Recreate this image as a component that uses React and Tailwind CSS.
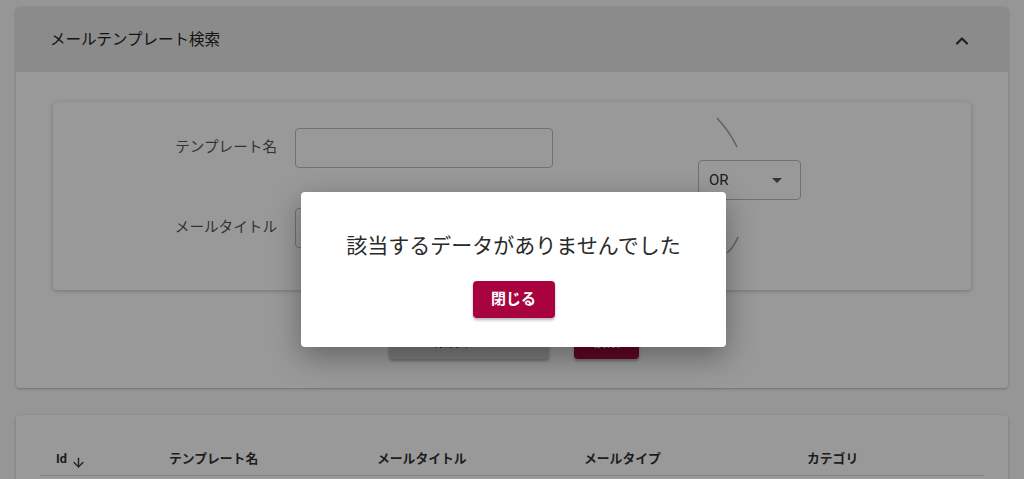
import { ChevronUp, ArrowDown } from 'lucide-react';

const font = { fontFamily: 'Roboto, "Noto Sans CJK JP", sans-serif' };

const FieldRow = ({ label }) => (
    <div className="flex items-center h-10">
        <label className="w-[242px] text-right text-[14.6px] text-[#555] pr-[18px]">{label}</label>
        <input className="w-[258px] h-10 border border-[#bdbdbd] rounded bg-white px-3 text-sm outline-none" />
    </div>
);

const Bracket = () => (
    <svg className="absolute left-0 top-0" width="80" height="160" viewBox="0 0 80 160" fill="none">
        <path d="M19 16 Q32 30 39 45" stroke="#a5a5a5" strokeWidth="1.6" />
        <path d="M40 135 Q36 145 29 151" stroke="#a5a5a5" strokeWidth="1.6" />
    </svg>
);

const SearchPanel = () => (
    <div className="mx-4 mt-[7px] bg-white rounded shadow-[0_1px_3px_rgba(0,0,0,0.25)] overflow-hidden">
        <div className="h-[65px] bg-[#e8e8e8] flex items-center justify-between pl-[34px] pr-[36px] pt-[3px]">
            <span className="text-[15.5px] text-[#222]">メールテンプレート検索</span>
            <ChevronUp size={20} strokeWidth={2.6} className="text-[#333]" />
        </div>
        <div className="px-[37px] pt-[30px] pb-[29px]">
            <div className="flex h-[188px] rounded shadow-[0_1px_4px_rgba(0,0,0,0.25)] bg-white">
                <div className="flex flex-col gap-10 pt-[26px]">
                    <FieldRow label="テンプレート名" />
                    <FieldRow label="メールタイトル" />
                </div>
                <div className="relative ml-[145px] w-[140px] pt-[58px]">
                    <Bracket />
                    <div className="relative w-[103px] h-10 border border-[#bdbdbd] rounded bg-white flex items-center justify-between pl-[10px] pr-[18px]">
                        <span className="text-[15px] text-[#333]">OR</span>
                        <svg width="10" height="5" viewBox="0 0 10 5"><path d="M0 0 L10 0 L5 5 Z" fill="#555" /></svg>
                    </div>
                </div>
            </div>
            <div className="flex justify-center gap-[25px] mt-[33px] pl-[4px]">
                <button className="w-[160px] h-9 rounded bg-[#d0d0d0] shadow-[0_2px_3px_rgba(0,0,0,0.3)] text-[14px] font-bold text-[#333]">条件クリア</button>
                <button className="w-[65px] h-9 rounded bg-[#a3093d] shadow-[0_2px_3px_rgba(0,0,0,0.3)] text-[14px] font-bold text-white">検索</button>
            </div>
        </div>
    </div>
);

const ResultTable = () => (
    <div className="mx-4 mt-[27px] bg-white rounded shadow-[0_1px_3px_rgba(0,0,0,0.25)] px-6 pt-[34px]">
        <div className="grid grid-cols-[113px_208px_207px_223px_1fr] border-b border-[#ddd] h-[27px] text-[12.8px] font-bold text-[#333]">
            <div className="pl-4 flex items-start gap-1"><span>Id</span><ArrowDown size={15} strokeWidth={2.2} className="mt-[6px]" /></div>
            <div className="pl-4">テンプレート名</div>
            <div className="pl-4">メールタイトル</div>
            <div className="pl-4">メールタイプ</div>
            <div className="pl-4">カテゴリ</div>
        </div>
        <div className="h-10" />
    </div>
);

export default function App() {
    return (
        <div className="relative h-[479px] overflow-hidden bg-[#fafafa]" style={font}>
            <SearchPanel />
            <ResultTable />
            <div className="absolute inset-0 bg-black/40 flex justify-center pt-[192px] pl-[3px]">
                <div className="w-[425px] h-[155px] bg-white rounded shadow-[0_10px_30px_rgba(0,0,0,0.35)] flex flex-col items-center pt-[39px]">
                    <p className="text-[21px] leading-[30px] text-[#2a2a2a]">該当するデータがありませんでした</p>
                    <button className="mt-[20px] w-[82px] h-[37px] rounded bg-[#a8033f] text-white text-[15px] font-bold shadow-[0_2px_3px_rgba(0,0,0,0.3)]">閉じる</button>
                </div>
            </div>
        </div>
    );
}
